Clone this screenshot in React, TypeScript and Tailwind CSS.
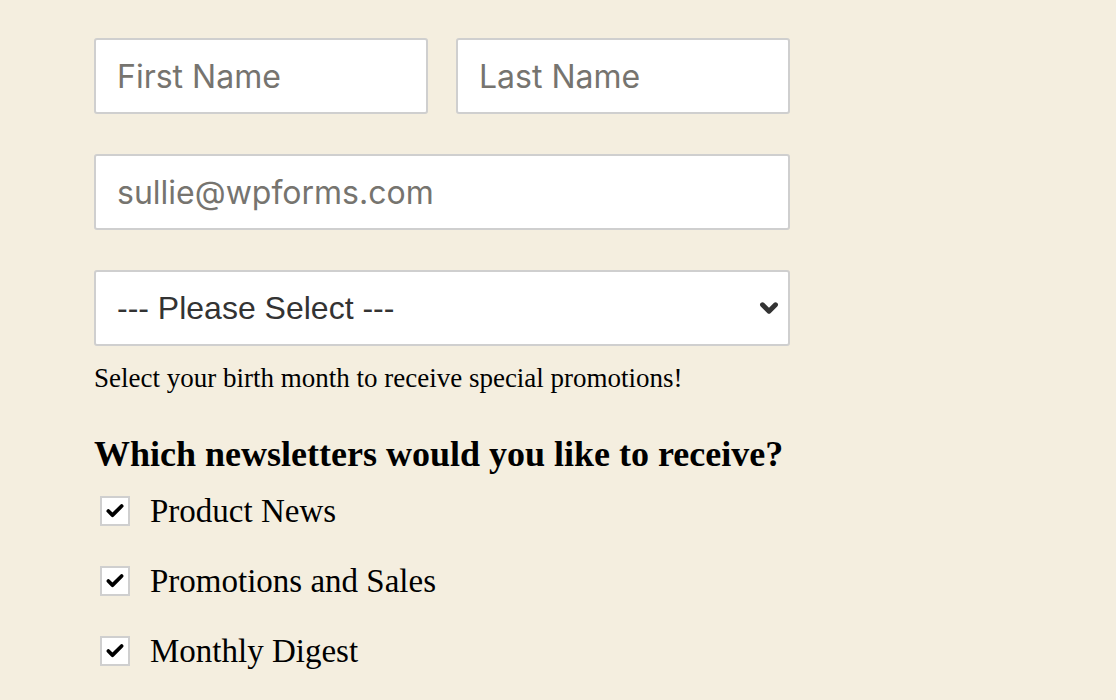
import { Check, ChevronDown } from "lucide-react";

const inputCls =
  "h-[76px] w-full rounded-[3px] border-2 border-[#cfcfcf] bg-white px-[21px] text-[32px] text-[#333] placeholder:text-[#76746f] outline-none";

const newsletters = ["Product News", "Promotions and Sales", "Monthly Digest"];

function Checkbox({ label }: { label: string }) {
  return (
    <label className="flex h-[70px] items-center">
      <span className="ml-[6px] flex h-[30px] w-[30px] shrink-0 items-center justify-center border-2 border-[#cfcfcf] bg-white">
        <Check className="h-[20px] w-[20px] text-black" strokeWidth={4.5} />
      </span>
      <span className="ml-[20px] text-[33px] leading-[40px] text-black">{label}</span>
    </label>
  );
}

export default function App() {
  return (
    <div className="min-h-[700px] w-full bg-[#f4eedf] pl-[94px] pt-[38px] font-['Liberation_Serif',serif]">
      <div className="w-[696px]">
        <div className="grid grid-cols-2 gap-[28px] font-['Inter',sans-serif]">
          <input className={inputCls} placeholder="First Name" />
          <input className={inputCls} placeholder="Last Name" />
        </div>

        <input
          className={inputCls + " mt-[40px] font-['Inter',sans-serif]"}
          placeholder="sullie@wpforms.com"
        />

        <div className="relative mt-[40px] flex h-[76px] items-center rounded-[3px] border-2 border-[#cfcfcf] bg-white pl-[21px] font-['Liberation_Sans',sans-serif] text-[32px] text-[#333]">
          --- Please Select ---
          <ChevronDown
            className="absolute right-[6px] top-1/2 h-[26px] w-[26px] -translate-y-1/2 text-[#333]"
            strokeWidth={4.5}
          />
        </div>

        <p className="mt-[16px] text-[27px] leading-[32px] text-black">
          Select your birth month to receive special promotions!
        </p>

        <h3 className="mt-[38px] text-[36px] font-bold leading-[44px] text-black">
          Which newsletters would you like to receive?
        </h3>

        <div className="flex flex-col">
          {newsletters.map((n) => (
            <Checkbox key={n} label={n} />
          ))}
        </div>
      </div>
    </div>
  );
}
